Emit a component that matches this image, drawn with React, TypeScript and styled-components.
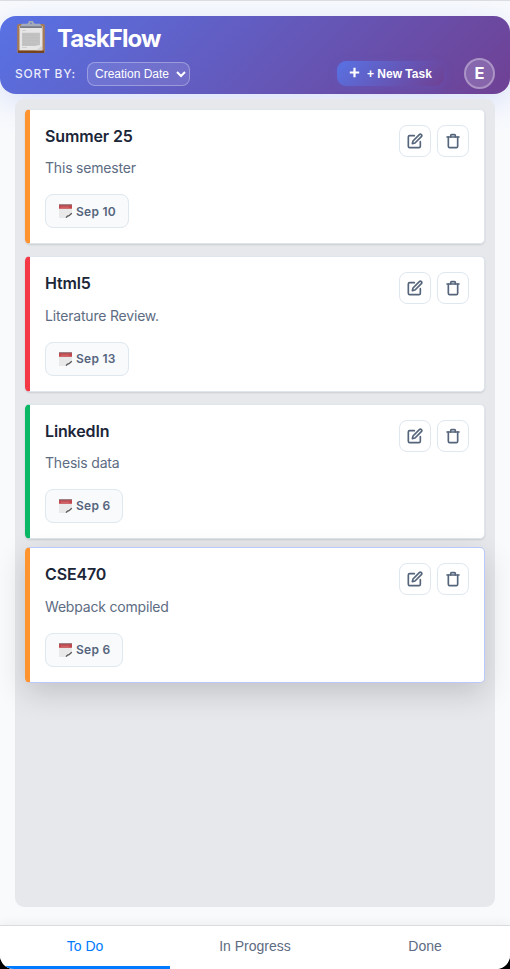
import React from "react";
import styled, { createGlobalStyle } from "styled-components";

const Global = createGlobalStyle`
  *, *::before, *::after { box-sizing: border-box; }
  body { margin: 0; background: #000; font-family: Inter, sans-serif; }
  button, select { font-family: inherit; margin: 0; }
`;

const Page = styled.div`
  height: 969px;
  display: flex;
  flex-direction: column;
  overflow: hidden;
  background: #f8fafc;
  border-top: 1px solid #dcdde2;
  border-radius: 0 0 14px 14px;
`;

const Header = styled.header`
  height: 78px;
  flex: none;
  margin-top: 15px;
  padding: 3px 15px 0;
  border-radius: 16px;
  color: #fff;
  background: linear-gradient(135deg, #5872e4 0%, #6f4194 100%);
  box-shadow: 0 8px 32px rgba(88, 114, 240, 0.2);
`;

const Brand = styled.div`
  display: flex;
  align-items: center;
  height: 37px;
  gap: 10px;
`;

const Title = styled.h1`
  margin: 0;
  padding-top: 1px;
  font-size: 24px;
  line-height: 37px;
  font-weight: 700;
  letter-spacing: -0.95px;
`;

const Controls = styled.div`
  display: flex;
  align-items: center;
  height: 35px;
`;

const SortLabel = styled.label`
  width: 72px;
  font-size: 12px;
  font-weight: 500;
  letter-spacing: 0.75px;
  white-space: nowrap;
  color: rgba(255, 255, 255, 0.88);
`;

const SortSelect = styled.button`
  display: flex;
  align-items: center;
  justify-content: space-between;
  width: 103px;
  height: 24px;
  padding: 0 3px 0 7px;
  border: 1px solid rgba(255, 255, 255, 0.3);
  border-radius: 8px;
  color: #fff;
  background: rgba(255, 255, 255, 0.1);
  font: 12px "Liberation Sans", sans-serif;
  white-space: nowrap;
`;

const NewTask = styled.button`
  display: flex;
  align-items: center;
  gap: 7px;
  width: 107px;
  height: 25px;
  margin-left: auto;
  padding: 0 0 0 12px;
  border: 0;
  border-radius: 9px;
  color: #fff;
  background: linear-gradient(135deg, #5872e4, #6f4194);
  box-shadow: 0 2px 8px rgba(88, 100, 220, 0.25);
  font: bold 12px "Liberation Sans", sans-serif;
  white-space: nowrap;

  svg { margin-bottom: 2px; }
`;

const Avatar = styled.div`
  display: grid;
  place-items: center;
  width: 31px;
  height: 31px;
  margin-left: 20px;
  border: 2px solid rgba(255, 255, 255, 0.3);
  border-radius: 50%;
  background: rgba(255, 255, 255, 0.18);
  font-size: 16.5px;
  line-height: 25px;
  padding-bottom: 1px;
  font-weight: 700;
`;

const Column = styled.main`
  display: flex;
  flex-direction: column;
  flex: none;
  height: 808px;
  margin: 5px 15px 0;
  padding: 10.05px 10px;
  gap: 12.2px;
  border-radius: 9px;
  background: #e7e8ec;
`;

const Card = styled.article<{ $accent: string; $lifted?: boolean }>`
  display: flex;
  justify-content: space-between;
  height: 135.2px;
  flex: none;
  padding: 13.9px 15px;
  border: 1px solid ${(p) => (p.$lifted ? "#bac8fb" : "#dfe5ed")};
  border-left: 5px solid ${(p) => p.$accent};
  border-radius: 5px;
  background: #fff;
  box-shadow: ${(p) =>
    p.$lifted
      ? "0 10px 30px rgba(0, 0, 0, 0.16)"
      : "0 1px 2px rgba(0, 0, 0, 0.12)"};
  margin-top: ${(p) => (p.$lifted ? "-3.85px" : "0")};
`;

const Details = styled.div`
  display: flex;
  flex-direction: column;
  align-items: flex-start;
`;

const CardTitle = styled.h2`
  margin: 0;
  font-size: 16px;
  line-height: 24px;
  font-weight: 600;
  letter-spacing: -0.14px;
  color: #1b2638;
`;

const Description = styled.p`
  margin: 9.3px 0 15px;
  font-size: 14px;
  line-height: 22px;
  letter-spacing: -0.19px;
  color: #5d6c82;
`;

const DatePill = styled.span`
  display: flex;
  align-items: center;
  gap: 3px;
  height: 34px;
  padding: 0 12px;
  border: 1px solid #dfe7ef;
  border-radius: 8px;
  background: #f8fafc;
  color: #56657c;
  font-size: 12px;
  font-weight: 600;
  letter-spacing: 0.27px;
`;

const Actions = styled.div`
  display: flex;
  gap: 6px;
  padding-top: 0.9px;
`;

const IconButton = styled.button`
  display: grid;
  place-items: center;
  width: 32px;
  height: 32px;
  padding: 0;
  border: 1px solid #dfe7ef;
  border-radius: 8px;
  background: #fff;
  color: #55657b;
`;

const Tabs = styled.nav`
  display: grid;
  grid-template-columns: repeat(3, 1fr);
  flex: none;
  height: 44px;
  margin-top: 18px;
  border-top: 1px solid #d9dbdf;
  background: #fff;
  box-shadow: 0 -2px 10px rgba(0, 0, 0, 0.05);
`;

const Tab = styled.button<{ $active?: boolean }>`
  padding: 0 0 1px;
  border: 0;
  border-bottom: 3px solid ${(p) => (p.$active ? "#007bff" : "transparent")};
  background: transparent;
  color: ${(p) => (p.$active ? "#007bff" : "#5d6c82")};
  font: 14px "Liberation Sans", sans-serif;
`;

const Clipboard = () => (
  <svg width="32" height="34" viewBox="0 0 32 34">
    <rect x="2.2" y="3" width="27.6" height="29" rx="1.6" fill="#a87a52" />
    <path d="M3 29.5h26V32H3z" fill="#76451f" />
    <path d="M4.5 5h23v24.3h-23z" fill="#e6e6e6" />
    <path d="M5 5h22v2H5z" fill="#777c87" />
    <path d="M7 2.7h5l1.5-1a2.5 2.5 0 0 1 5 0l1.5 1h5L27 5.2H5z" fill="#a5abb8" />
    <circle cx="16" cy="2.2" r="1" fill="#7786bf" />
    <path d="M7 11.8h18v12.3l-5 1H7z" fill="#c3c3c3" />
    <path d="M7 9.5h4M7 26.5h5" stroke="#c4c4c4" strokeWidth=".7" />
    <path d="M8 14h15M8 17h16M8 20h16M8 23h14" stroke="#bababa" strokeWidth=".6" />
    <path d="M27 25v4.3h-6z" fill="#d4d4d4" />
  </svg>
);

const Calendar = () => (
  <svg width="15" height="16" viewBox="0 0 15 16">
    <path d="M1 1.5h13V15H1z" fill="#e9e9e9" />
    <path d="M1 2h13v3.8H1z" fill="#c5474c" />
    <path d="M1 1.2h13v1.2H1z" fill="#8d6569" />
    <path d="M3 4.2h8" stroke="#dc8486" strokeWidth=".6" />
    <path d="M9.5 15 14 10.5V15z" fill="#f8fafc" />
    <path d="M8 14.6 9.5 13l1.5-.3 2.8-2.4" fill="none" stroke="#555" strokeWidth="1.3" />
  </svg>
);

const EditIcon = () => (
  <svg width="16" height="16" viewBox="0 0 24 24" fill="none" stroke="currentColor" strokeWidth="2.5" strokeLinecap="round" strokeLinejoin="round">
    <path d="M11 4H4a2 2 0 0 0-2 2v14a2 2 0 0 0 2 2h14a2 2 0 0 0 2-2v-7" />
    <path d="M18.5 2.5a2.121 2.121 0 0 1 3 3L12 15l-4 1 1-4z" />
  </svg>
);

const TrashIcon = () => (
  <svg width="16" height="16" viewBox="0 0 24 24" fill="none" stroke="currentColor" strokeWidth="2.5" strokeLinecap="round" strokeLinejoin="round">
    <path d="M3 6h18" />
    <path d="M19 6v14a2 2 0 0 1-2 2H7a2 2 0 0 1-2-2V6M8.5 6V4a1.5 1.5 0 0 1 1.5-1.5h4A1.5 1.5 0 0 1 15.5 4v2" />
  </svg>
);

const tasks = [
  { title: "Summer 25", text: "This semester", date: "Sep 10", accent: "#ff932e" },
  { title: "Html5", text: "Literature Review.", date: "Sep 13", accent: "#f43846" },
  { title: "LinkedIn", text: "Thesis data", date: "Sep 6", accent: "#09b765" },
  { title: "CSE470", text: "Webpack compiled", date: "Sep 6", accent: "#ff932e", lifted: true },
];

export default function App() {
  return (
    <>
      <Global />
      <Page>
        <Header>
          <Brand>
            <Clipboard />
            <Title>TaskFlow</Title>
          </Brand>
          <Controls>
            <SortLabel>SORT BY:</SortLabel>
            <SortSelect>
              Creation Date
              <svg width="10" height="8" viewBox="0 0 10 8" fill="none" stroke="#fff" strokeWidth="2">
                <path d="m1 2 4 4 4-4" />
              </svg>
            </SortSelect>
            <NewTask>
              <svg width="11" height="11" viewBox="0 0 11 11" stroke="#fff" strokeWidth="2.2">
                <path d="M5.5 .8v9.4M.8 5.5h9.4" />
              </svg>
              + New Task
            </NewTask>
            <Avatar>E</Avatar>
          </Controls>
        </Header>
        <Column>
          {tasks.map((t) => (
            <Card key={t.title} $accent={t.accent} $lifted={t.lifted}>
              <Details>
                <CardTitle>{t.title}</CardTitle>
                <Description>{t.text}</Description>
                <DatePill>
                  <Calendar />
                  {t.date}
                </DatePill>
              </Details>
              <Actions>
                <IconButton aria-label="Edit"><EditIcon /></IconButton>
                <IconButton aria-label="Delete"><TrashIcon /></IconButton>
              </Actions>
            </Card>
          ))}
        </Column>
        <Tabs>
          <Tab $active>To Do</Tab>
          <Tab>In Progress</Tab>
          <Tab>Done</Tab>
        </Tabs>
      </Page>
    </>
  );
}
